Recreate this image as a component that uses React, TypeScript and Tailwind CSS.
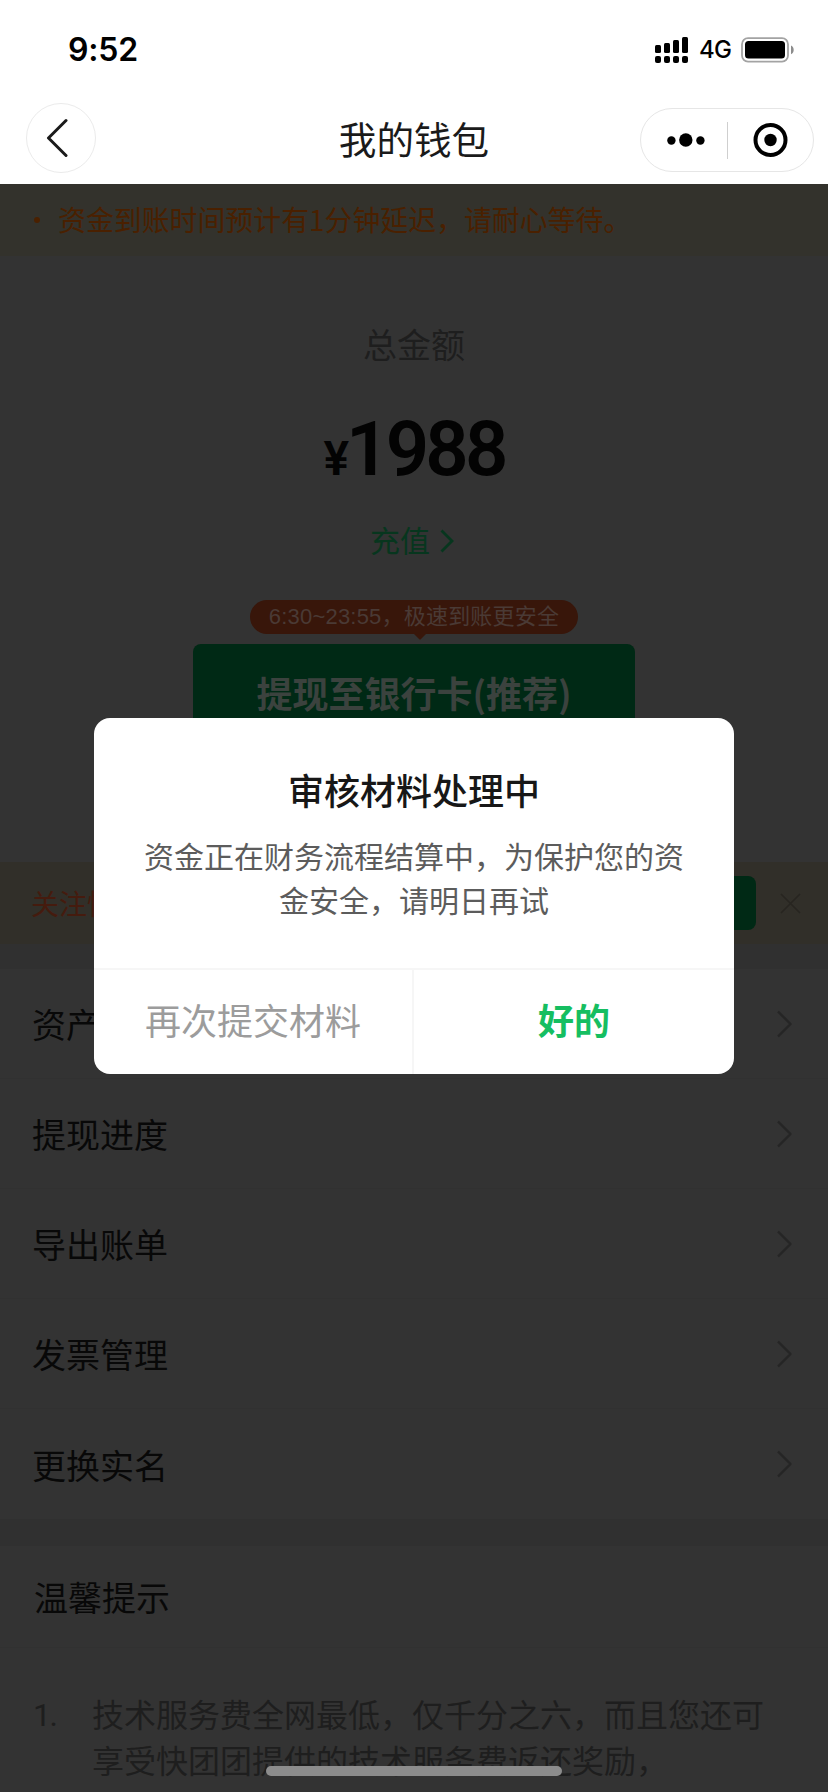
import { clsx } from "clsx";

const MENU_ITEMS = ["资产", "提现进度", "导出账单", "发票管理", "更换实名"];

function StatusBar() {
  return (
    <div className="flex h-[100px] items-center justify-between pl-[68px] pr-[33px]">
      <span className="font-[Inter] text-[32px] leading-none font-semibold tracking-[-0.2px] text-black">9:52</span>
      <div className="flex items-center">
        <svg width="34" height="28" viewBox="0 0 34 28" fill="#000">
          <rect x="0" y="9" width="6" height="8" rx="1.5" />
          <rect x="9" y="7" width="6" height="10" rx="1.5" />
          <rect x="18" y="4" width="6" height="13" rx="1.5" />
          <rect x="27" y="1" width="6" height="16" rx="1.5" />
          <rect x="0" y="20" width="6" height="7" rx="2" />
          <rect x="9" y="20" width="6" height="7" rx="2" />
          <rect x="18" y="20" width="6" height="7" rx="2" />
          <rect x="27" y="20" width="6" height="7" rx="2" />
        </svg>
        <span className="ml-2.5 w-[34px] font-[Inter] text-2xl leading-none font-medium tracking-[-0.8px] text-black">4G</span>
        <svg className="ml-2" width="54" height="26" viewBox="0 0 54 26">
          <rect x="1" y="1.2" width="46" height="23.4" rx="6" fill="none" stroke="#a3a3a3" strokeWidth="1.8" />
          <rect x="4" y="4" width="40" height="17.6" rx="3.5" fill="#000" />
          <path d="M50 8.5c3.6 1.4 3.6 7.4 0 8.8z" fill="#8c8c8c" />
        </svg>
      </div>
    </div>
  );
}

function NavBar() {
  return (
    <div className="flex h-[84px] items-start justify-between pl-[26px] pr-3.5">
      <button
        type="button"
        aria-label="返回"
        className="mt-[3px] flex size-[70px] shrink-0 items-center justify-center rounded-full border border-[#ebebeb]"
      >
        <svg className="-ml-2" width="22" height="40" viewBox="0 0 22 40" fill="none" stroke="#1a1a1a" strokeWidth="3">
          <path d="M20 2.5 2.5 20 20 37.5" strokeLinecap="round" strokeLinejoin="round" />
        </svg>
      </button>
      <h1 className="mt-[11px] ml-[92px] text-[37.6px] leading-[54px] font-normal text-[#1a1a1a]">我的钱包</h1>
      <div className="mt-2 flex h-16 w-[174px] items-center rounded-full border border-[#e6e6e6]">
        <svg className="ml-[26px]" width="38" height="14" viewBox="0 0 38 14">
          <circle cx="4.4" cy="7.5" r="4.2" />
          <circle cx="18.8" cy="7" r="6.7" />
          <circle cx="33.4" cy="7.5" r="4.2" />
        </svg>
        <span className="ml-[22px] h-[37px] w-px bg-[#cfcfcf]" />
        <svg className="ml-[25px]" width="35" height="35" viewBox="0 0 35 35">
          <circle cx="17.5" cy="17" r="15" fill="none" stroke="#000" strokeWidth="4" />
          <circle cx="17.5" cy="17" r="6.2" />
        </svg>
      </div>
    </div>
  );
}

function Chevron() {
  return (
    <svg width="16" height="28" viewBox="0 0 16 28" fill="none" stroke="#252525" strokeWidth="2.4">
      <path d="M1 1.5 13.5 14 1 26.5" strokeLinejoin="round" />
    </svg>
  );
}

function Dialog() {
  return (
    <div
      role="dialog"
      className="absolute top-[718px] left-[94px] flex h-[356px] w-[640px] flex-col overflow-hidden rounded-2xl bg-white"
    >
      <div className="flex h-[250px] flex-col items-center pt-[45px]">
        <h2 className="text-4xl leading-[52px] font-medium text-[#171717]">审核材料处理中</h2>
        <p className="mt-[18px] text-center text-[30px] leading-[44px] text-[#5c5c5c]">
          资金正在财务流程结算中，为保护您的资
          <br />
          金安全，请明日再试
        </p>
      </div>
      <div className="flex flex-1 border-t-2 border-[#f6f6f6] text-4xl">
        <button type="button" className="w-80 border-r-2 border-[#f6f6f6] pb-1.5 text-[#9c9c9c]">
          再次提交材料
        </button>
        <button type="button" className="flex-1 pb-1.5 font-bold text-[#15be61]">
          好的
        </button>
      </div>
    </div>
  );
}

export default function App() {
  return (
    <div className="relative h-[1792px] w-[828px] overflow-hidden bg-white font-['Noto_Sans_CJK_SC',sans-serif]">
      <StatusBar />
      <NavBar />

      <main className="h-[1608px] overflow-hidden bg-[#333333]">
        <div className="flex h-[72px] items-center bg-[#33322c] text-[27.9px] text-[#4a2000]">
          <span className="ml-[34px] size-1.5 rounded-full bg-[#4a2000]" />
          <span className="ml-[18px]">资金到账时间预计有1分钟延迟，请耐心等待。</span>
        </div>

        <section className="flex h-[606px] flex-col items-center">
          <div className="mt-[63px] text-[34px] leading-[50px] text-[#1e1e1e]">总金额</div>
          <div className="mt-[38px] flex h-[84px] items-baseline font-[Roboto] leading-[84px] text-[#030303]">
            <span className="text-[48px] font-semibold tracking-[-3px]">¥</span>
            <span className="text-[76px] font-semibold tracking-[-3.8px]">1988</span>
          </div>
          <div className="mt-[26px] -ml-1 flex items-center text-[30px] leading-[44px] text-[#07361e]">
            充值
            <svg className="mt-1 ml-2.5" width="14" height="24" viewBox="0 0 14 24" fill="none" stroke="#07361e" strokeWidth="2.8">
              <path d="M1.5 1.5 12 12 1.5 22.5" />
            </svg>
          </div>
          <div className="relative mt-[39px] flex h-[34px] w-[328px] items-center justify-center rounded-full bg-[#38160a] text-[22px] leading-none tracking-[0.2px] text-[#4a3a35]">
            <span className="font-['Liberation_Sans','Noto_Sans_CJK_SC',sans-serif]">6:30~23:55，极速到账更安全</span>
            <svg className="absolute top-[33px] left-[163px]" width="14" height="7" viewBox="0 0 14 7" fill="#38160a">
              <path d="M0 0h14L8 6Q7 7 6 6z" />
            </svg>
          </div>
          <div className="mt-2.5 flex h-[98px] w-[442px] items-center justify-center rounded-lg bg-[#002915] pb-0.5 text-4xl font-bold text-[#3b423e]">
            提现至银行卡(推荐)
          </div>
        </section>

        <div className="flex h-[82px] items-center justify-between bg-[#312f29] pr-[27px] pl-[31px] text-[28px] text-[#451b0e]">
          <span>关注快团团</span>
          <div className="flex items-center">
            <span className="h-[54px] w-[140px] rounded-lg bg-[#002915]" />
            <svg className="ml-6" width="21" height="21" viewBox="0 0 21 21" stroke="#272520" strokeWidth="1.6">
              <path d="M1 1l19 19M20 1 1 20" />
            </svg>
          </div>
        </div>

        <div className="h-[25px] bg-[#303030]" />
        <ul>
          {MENU_ITEMS.map((item, i) => (
            <li
              key={item}
              className={clsx(
                "flex h-[110px] items-center justify-between pr-[35px] pl-8 text-[34px] text-[#080808]",
                i < MENU_ITEMS.length - 1 && "border-b border-[#313131]",
              )}
            >
              {item}
              <Chevron />
            </li>
          ))}
        </ul>
        <div className="h-[27px] bg-[#303030]" />

        <section>
          <h3 className="flex h-[102px] items-center border-b border-[#313131] pl-[34px] text-[34px] font-normal text-[#080808]">
            温馨提示
          </h3>
          <div className="flex pt-[42px] pl-[33px] text-[32px] leading-[46px] text-[#1e1e1e]">
            <span className="w-[59px] pt-0.5 font-[Roboto] tracking-[-1.5px]">1.</span>
            <p>
              技术服务费全网最低，仅千分之六，而且您还可
              <br />
              享受快团团提供的技术服务费返还奖励，
            </p>
          </div>
        </section>
      </main>

      <Dialog />
      <div className="absolute bottom-4 left-[266px] h-2.5 w-[296px] rounded-full bg-[#8c8c8c]" />
    </div>
  );
}
